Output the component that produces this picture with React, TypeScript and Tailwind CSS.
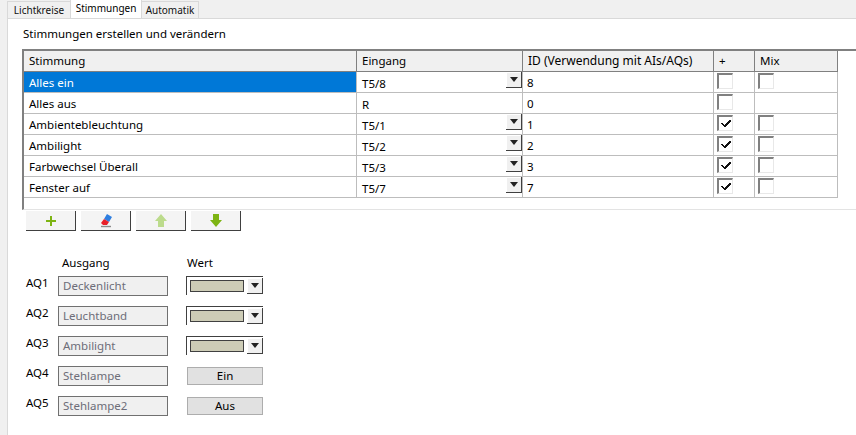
const font = "font-['Noto_Sans',sans-serif]"

const rows = [
  { name: "Alles ein", input: "T5/8", id: "8", plus: false, mix: true, combo: true },
  { name: "Alles aus", input: "R", id: "0", plus: false, mix: false, combo: false },
  { name: "Ambientebleuchtung", input: "T5/1", id: "1", plus: true, mix: true, combo: true },
  { name: "Ambilight", input: "T5/2", id: "2", plus: true, mix: true, combo: true },
  { name: "Farbwechsel Überall", input: "T5/3", id: "3", plus: true, mix: true, combo: true },
  { name: "Fenster auf", input: "T5/7", id: "7", plus: true, mix: true, combo: true },
]

const outputs = [
  { aq: "AQ1", name: "Deckenlicht", value: null },
  { aq: "AQ2", name: "Leuchtband", value: null },
  { aq: "AQ3", name: "Ambilight", value: null },
  { aq: "AQ4", name: "Stehlampe", value: "Ein" },
  { aq: "AQ5", name: "Stehlampe2", value: "Aus" },
]

const cols = "grid w-[814px] grid-cols-[333px_166px_191px_41px_83px]"

function Box({ checked }: { checked?: boolean }) {
  return (
    <span className="mt-[1px] ml-[3px] flex h-[16px] w-[16px] items-center justify-center border-2 border-t-[#808080] border-l-[#808080] border-r-[#e8e8e8] border-b-[#e8e8e8] bg-white border-r-[1px] border-b-[1px]">
      {checked && (
        <svg width="10" height="9" viewBox="0 0 10 9">
          <path d="M0 4h2v1h1v1h1V5h1V4h1V3h1V2h1V1h2v2H9v1H8v1H7v1H6v1H5v1H3V7H2V6H1V5H0z" fill="#111" />
        </svg>
      )}
    </span>
  )
}

function Arrow() {
  return (
    <span className="flex h-[16px] w-[16px] items-center justify-center border-r border-b border-r-[#404040] border-b-[#404040] bg-[#f0f0f0] shadow-[inset_1px_1px_0_#fff]">
      <span className="h-0 w-0 border-x-[4px] border-t-[5px] border-x-transparent border-t-[#222]" />
    </span>
  )
}

function ToolButton({ children }: { children: React.ReactNode }) {
  return (
    <button className="flex h-[20px] w-[50px] items-center justify-center border-r border-b border-r-[#404040] border-b-[#404040] bg-[#f4f4f4]">
      {children}
    </button>
  )
}

export default function App() {
  return (
    <div className={`${font} flex h-[435px] w-[856px] flex-col overflow-hidden bg-[#f0f0f0] text-[11.5px] text-black`}>
      {/* Tabs */}
      <div className="flex h-[18px] items-end pl-[7px] text-[10px]">
        <div className="flex h-[17px] w-[63px] items-center justify-center border-t border-l border-[#d9d9d9] bg-[#f0f0f0] text-[#111]">Lichtkreise</div>
        <div className="flex h-[18px] w-[72px] items-center justify-center border-x border-[#d9d9d9] bg-white pb-[2px]">Stimmungen</div>
        <div className="flex h-[17px] w-[57px] items-center justify-center border-t border-r border-[#d9d9d9] bg-[#f0f0f0] text-[#111]">Automatik</div>
      </div>

      {/* Panel */}
      <div className="ml-[7px] flex-1 border-t border-l border-[#d9d9d9] bg-white pl-[14px]">
        <div className="flex h-[30px] items-center pb-[1px] pl-[1px] leading-none">Stimmungen erstellen und verändern</div>

        {/* Table */}
        <div className="h-[161px] border-t-2 border-l-2 border-b border-t-[#808080] border-l-[#808080] border-b-[#e3e3e3]">
          <div className={`${cols} h-[21px] border-b border-[#808080] bg-[#f0f0f0]`}>
            {["Stimmung", "Eingang", "ID (Verwendung mit AIs/AQs)", "+", "Mix"].map((h) => (
              <div key={h} className={`flex items-center border-r border-[#808080] pl-[5px] ${h.startsWith("ID") ? "text-[12px]" : ""}`}>{h}</div>
            ))}
          </div>
          {rows.map((r, i) => (
            <div key={r.name} className={`${cols} h-[21px] border-b border-[#bdbdbd]`}>
              <div className={`flex items-center border-r border-[#bdbdbd] pl-[5px] ${i === 0 ? "bg-[#0078d7] text-white" : ""}`}>{r.name}</div>
              <div className="flex items-start justify-between border-r border-[#bdbdbd] pl-[5px]">
                <span className="mt-[3px]">{r.input}</span>
                {r.combo && <Arrow />}
              </div>
              <div className="flex items-center border-r border-[#bdbdbd] pt-[1px] pl-[4px]">{r.id}</div>
              <div className="flex items-start border-r border-[#bdbdbd]"><Box checked={r.plus} /></div>
              <div className="flex items-start border-r border-[#bdbdbd]">{r.mix && <Box />}</div>
            </div>
          ))}
        </div>

        {/* Toolbar */}
        <div className="mt-[1px] flex gap-[5px] pl-[4px]">
          <ToolButton>
            <svg width="12" height="12" viewBox="0 0 12 12"><path d="M5 1h2v4h4v2H7v4H5V7H1V5h4z" fill="#7db413" /></svg>
          </ToolButton>
          <ToolButton>
            <svg width="14" height="15" viewBox="0 0 14 15">
              <path d="M8 1l5 3-3 5-5-3z" fill="#2f7fe0" />
              <path d="M5 6l5 3-2 3H4L2 10z" fill="#e8202a" />
              <path d="M2 13.5h10" stroke="#8a8a8a" strokeWidth="1.4" />
            </svg>
          </ToolButton>
          <ToolButton>
            <svg width="14" height="15" viewBox="0 0 14 15"><path d="M7 1l6 7H10v6H4V8H1z" fill="#bcdb8c" /></svg>
          </ToolButton>
          <ToolButton>
            <svg width="14" height="15" viewBox="0 0 14 15"><path d="M7 14l6-7H10V1H4v6H1z" fill="#7db413" /></svg>
          </ToolButton>
        </div>

        {/* Outputs */}
        <div className="mt-[23px] flex h-[18px] items-center">
          <span className="ml-[40px] w-[125px]">Ausgang</span>
          <span>Wert</span>
        </div>
        <div className="mt-[4px] flex flex-col gap-[10px]">
          {outputs.map((o) => (
            <div key={o.aq} className="flex h-[20px] items-start">
              <span className="w-[36px] pl-[4px] leading-[14px]">{o.aq}</span>
              <div className="flex h-[20px] w-[110px] items-center border border-[#707070] bg-[#f0f0f0] pb-[1px] pl-[4px] text-[#6d6d78]">{o.name}</div>
              <div className="ml-[18px]">
                {o.value ? (
                  <button className="mt-[1px] ml-[1px] flex h-[18px] w-[76px] items-center justify-center border border-[#adadad] bg-[#e1e1e1]">{o.value}</button>
                ) : (
                  <div className="flex h-[19px] w-[77px] items-center justify-between border-t border-l border-[#404040] bg-white pl-[3px]">
                    <span className="h-[12px] w-[54px] border border-[#404040] bg-[#cdccb6]" />
                    <Arrow />
                  </div>
                )}
              </div>
            </div>
          ))}
        </div>
      </div>
    </div>
  )
}
